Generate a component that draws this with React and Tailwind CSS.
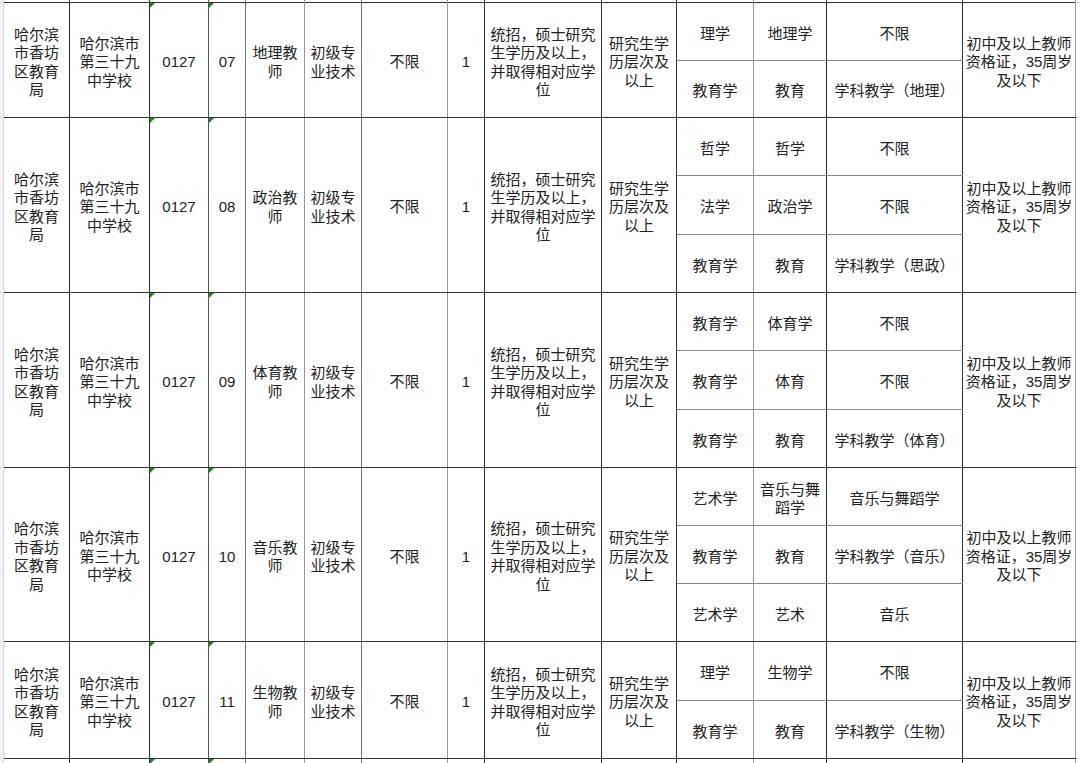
import React from "react";

// one row of the sheet: code, post name, sub rows of [学科门类, 一级学科, 二级学科]
const rows = [
  {
    h: "h-[115px]",
    code: "07",
    post: "地理教\n师",
    subs: [
      ["理学", "地理学", "不限"],
      ["教育学", "教育", "学科教学（地理）"],
    ],
  },
  {
    h: "h-[175px]",
    code: "08",
    post: "政治教\n师",
    subs: [
      ["哲学", "哲学", "不限"],
      ["法学", "政治学", "不限"],
      ["教育学", "教育", "学科教学（思政）"],
    ],
  },
  {
    h: "h-[175px]",
    code: "09",
    post: "体育教\n师",
    subs: [
      ["教育学", "体育学", "不限"],
      ["教育学", "体育", "不限"],
      ["教育学", "教育", "学科教学（体育）"],
    ],
  },
  {
    h: "h-[174px]",
    code: "10",
    post: "音乐教\n师",
    subs: [
      ["艺术学", "音乐与舞\n蹈学", "音乐与舞蹈学"],
      ["教育学", "教育", "学科教学（音乐）"],
      ["艺术学", "艺术", "音乐"],
    ],
  },
  {
    h: "h-[117px]",
    code: "11",
    post: "生物教\n师",
    subs: [
      ["理学", "生物学", "不限"],
      ["教育学", "教育", "学科教学（生物）"],
    ],
  },
];

function Mark() {
  return (
    <span className="absolute top-0 left-0 w-0 h-0 border-t-[5px] border-r-[5px] border-t-[#128a12] border-r-transparent" />
  );
}

function Cell({ className, children, mark }) {
  return (
    <div
      className={`relative shrink-0 border-r pt-[5px] flex items-center justify-center text-center whitespace-pre-line ${className}`}
    >
      {mark ? <Mark /> : null}
      {children}
    </div>
  );
}

function Group({ h, border = true, mark = true, row, subs }) {
  const r = row || {};
  return (
    <div className={`flex ${h}`}>
      {/* excel gridline strip */}
      <div className={`w-[4px] shrink-0 bg-[#f1f3f6] border-r border-[#d6d9de] ${border ? "border-b" : ""}`} />
      <div className={`w-[1072px] shrink-0 flex ${border ? "border-b border-[#333]" : ""}`}>
        <Cell className="w-[66px] border-[#333]">{r.unit}</Cell>
        <Cell className="w-[80px] border-[#333]">{r.school}</Cell>
        <Cell className="w-[59px] border-[#555]" mark={mark}>{r.no}</Cell>
        <Cell className="w-[37px] border-[#777]" mark={mark}>{r.code}</Cell>
        <Cell className="w-[59px] border-[#999]">{r.post}</Cell>
        <Cell className="w-[57px] border-[#777]">{r.kind}</Cell>
        <Cell className="w-[86px] border-[#999]">{r.limit}</Cell>
        <Cell className="w-[37px] border-[#333]">{r.count}</Cell>
        <Cell className="w-[117px] border-[#333]">{r.req}</Cell>
        <Cell className="w-[75px] border-[#333]">{r.edu}</Cell>
        <div className="w-[286px] shrink-0 flex flex-col">
          {subs.map((s, i) => (
            <div
              key={i}
              className={`flex flex-1 min-h-0 ${i < subs.length - 1 ? "border-b border-[#8a8a8a]" : ""}`}
            >
              <Cell className="w-[77px] border-[#999]">{s[0]}</Cell>
              <Cell className="w-[73px] border-[#333]">{s[1]}</Cell>
              <Cell className="w-[136px] border-[#333]">{s[2]}</Cell>
            </div>
          ))}
        </div>
        <Cell className="w-[113px] border-[#999]">{r.other}</Cell>
      </div>
      <div className={`flex-1 ${border ? "border-b border-[#d6d9de]" : ""}`} />
    </div>
  );
}

export default function App() {
  return (
    <div className="w-[1080px] h-[763px] overflow-hidden bg-white text-[#222] text-[15px] leading-[18.5px] font-['Liberation_Sans','Noto_Sans_CJK_SC',sans-serif]">
      <Group h="h-[3px]" mark={false} subs={[["", "", ""]]} />
      {rows.map((item) => (
        <Group
          key={item.code}
          h={item.h}
          subs={item.subs}
          row={{
            unit: "哈尔滨\n市香坊\n区教育\n局",
            school: "哈尔滨市\n第三十九\n中学校",
            no: "0127",
            code: item.code,
            post: item.post,
            kind: "初级专\n业技术",
            limit: "不限",
            count: "1",
            req: "统招，硕士研究\n生学历及以上，\n并取得相对应学\n位",
            edu: "研究生学\n历层次及\n以上",
            other: "初中及以上教师\n资格证，35周岁\n及以下",
          }}
        />
      ))}
      <Group h="h-[4px]" border={false} subs={[["", "", ""]]} />
    </div>
  );
}
